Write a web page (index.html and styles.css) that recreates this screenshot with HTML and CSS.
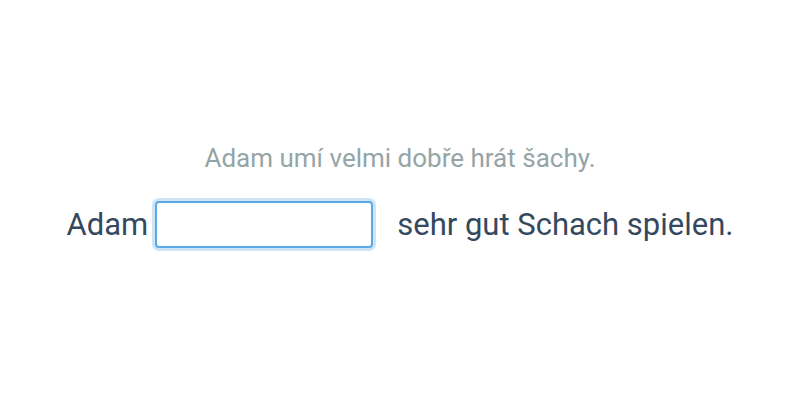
FILE: index.html
```html
<!DOCTYPE html>
<html lang="de">
<head>
<meta charset="utf-8">
<link rel="stylesheet" href="styles.css">
</head>
<body>
<main class="exercise">
  <p class="hint">Adam umí velmi dobře hrát šachy.</p>
  <div class="sentence">
    <span class="word">Adam</span>
    <input class="gap" type="text" aria-label="answer">
    <span class="word rest">sehr gut Schach spielen.</span>
  </div>
</main>
</body>
</html>
```

FILE: styles.css
```css
html, body {
  margin: 0;
  padding: 0;
  background: #ffffff;
}
body {
  height: 400px;
  display: flex;
  align-items: center;
  justify-content: center;
  font-family: Roboto, "Liberation Sans", sans-serif;
}
.exercise {
  display: flex;
  flex-direction: column;
  align-items: center;
  margin-top: -10px;
}
.hint {
  margin: 0 0 28px;
  font-size: 26px;
  line-height: 30px;
  color: #95a5a6;
}
.sentence {
  display: flex;
  align-items: center;
  color: #34495e;
  font-size: 31px;
}
.gap {
  box-sizing: border-box;
  width: 218px;
  height: 47px;
  margin: 0 24px 0 7px;
  border: 2px solid #5aa9e6;
  border-radius: 4px;
  box-shadow: 0 0 0 3px rgba(90, 169, 230, 0.3);
  outline: none;
  background: #fff;
  font: inherit;
}
```
